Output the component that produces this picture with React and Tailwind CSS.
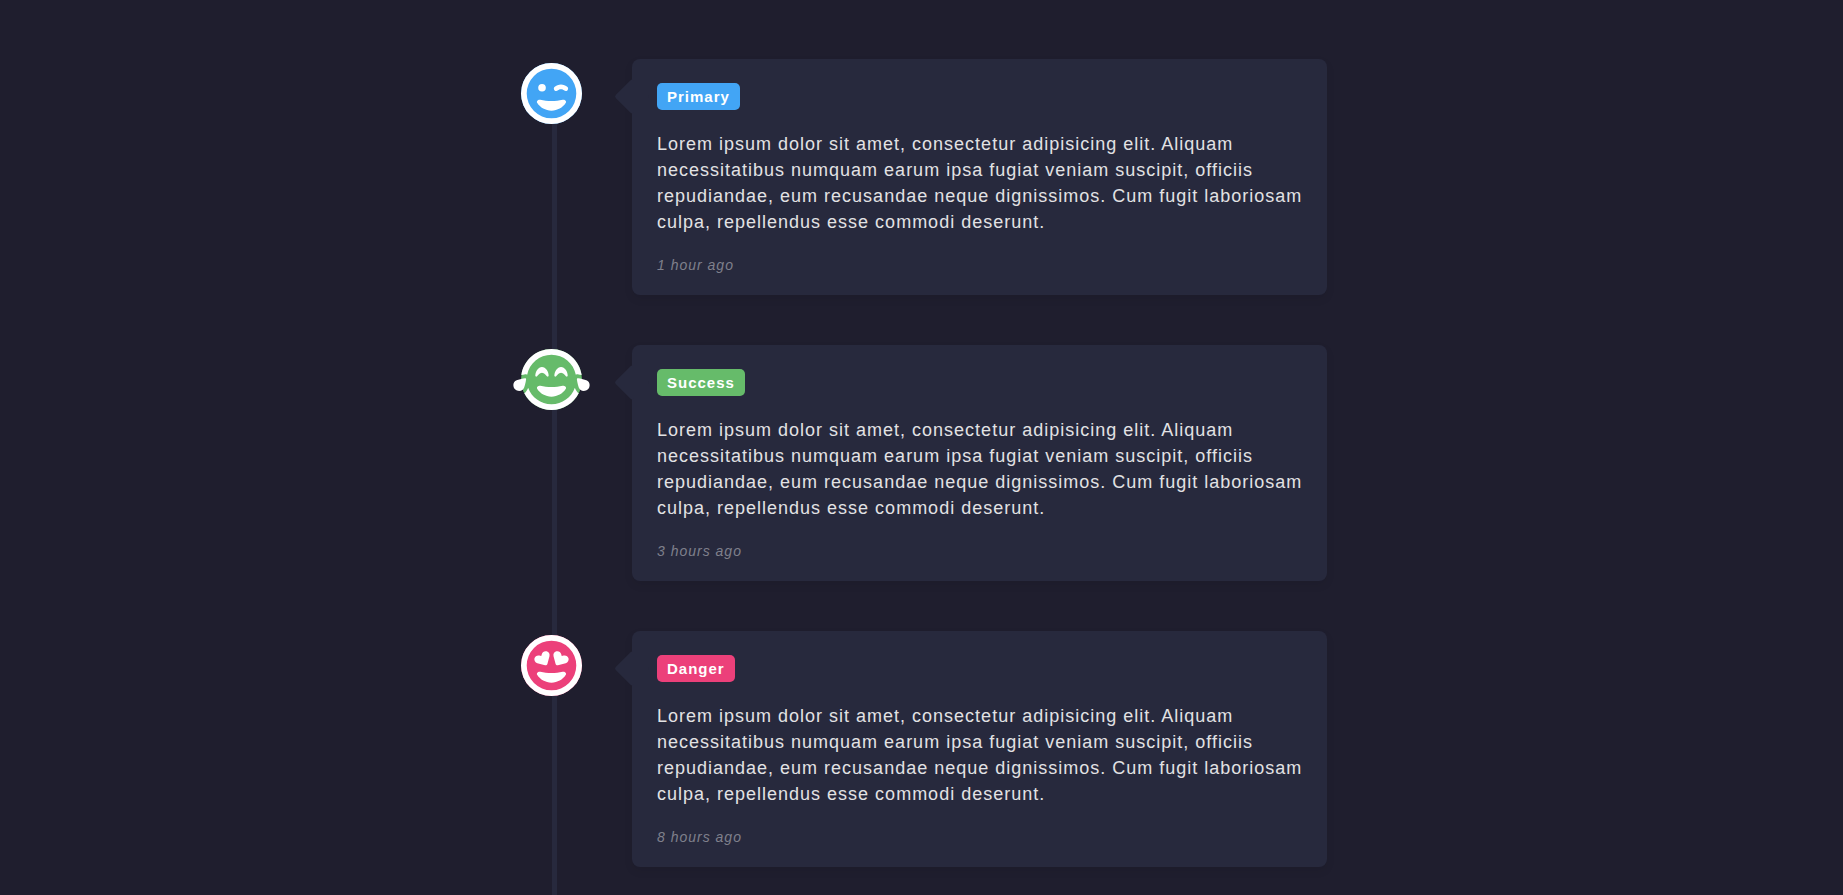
import { FaRegFaceGrinWink, FaRegFaceGrinTears, FaRegFaceGrinHearts } from "react-icons/fa6";

const TEXT =
  "Lorem ipsum dolor sit amet, consectetur adipisicing elit. Aliquam necessitatibus numquam earum ipsa fugiat veniam suscipit, officiis repudiandae, eum recusandae neque dignissimos. Cum fugit laboriosam culpa, repellendus esse commodi deserunt.";

const EVENTS = [
  { label: "Primary", time: "1 hour ago", color: "bg-[#42a5f5]", Icon: FaRegFaceGrinWink },
  { label: "Success", time: "3 hours ago", color: "bg-[#66bb6a]", Icon: FaRegFaceGrinTears },
  { label: "Danger", time: "8 hours ago", color: "bg-[#ec407a]", Icon: FaRegFaceGrinHearts },
];

function TimelineItem({ label, time, color, Icon }) {
  return (
    <li className="flex items-start gap-[50px]">
      <div className={`relative mt-1 flex size-[61px] shrink-0 items-center justify-center rounded-full ${color}`}>
        <Icon className="h-[61px] w-[77px] shrink-0 text-white" aria-hidden="true" />
      </div>
      <article className="relative min-w-0 flex-1 rounded-lg bg-[#27293d] pt-6 pr-5 pb-5 pl-[25px] shadow-[0_4px_10px_0_rgba(0,0,0,0.07)]">
        <span className="absolute top-[25px] left-0 size-[25px] -translate-x-1/2 rotate-45 rounded-xs bg-[#27293d]" />
        <h2 className={`relative w-fit rounded-[5px] px-[10px] text-[15px] leading-[27px] font-bold tracking-[1px] text-white ${color}`}>
          {label}
        </h2>
        <p className="relative mt-[21px] text-[18px] leading-[26px] tracking-[1px] text-[#e2e2e4]">{TEXT}</p>
        <time className="mt-5 block text-sm tracking-[1px] text-[#7f808c] italic">{time}</time>
      </article>
    </li>
  );
}

export default function App() {
  return (
    <main className="flex min-h-screen justify-center bg-[#1f1e2e] font-['Liberation_Sans',Arial,sans-serif]">
      <div className="relative w-full max-w-[811px] pt-[59px] pl-[5px]">
        <div className="absolute top-20 bottom-0 left-9 w-[5px] bg-[#27293d]" />
        <ol className="flex flex-col gap-[50px]">
          {EVENTS.map((event) => (
            <TimelineItem key={event.label} {...event} />
          ))}
        </ol>
      </div>
    </main>
  );
}
